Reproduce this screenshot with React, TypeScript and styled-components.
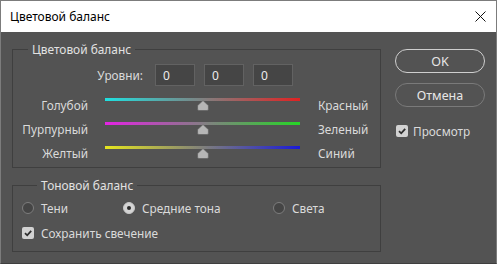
import React, { useState } from "react";
import styled, { createGlobalStyle } from "styled-components";

const GlobalStyle = createGlobalStyle`
  html, body {
    margin: 0;
    padding: 0;
    background: #535353;
  }
  * {
    box-sizing: border-box;
  }
`;

const font = `"Noto Sans", "Open Sans", "Liberation Sans", sans-serif`;

const Window = styled.div`
  width: 497px;
  height: 264px;
  border: 1px solid #7c7c7c;
  border-bottom-color: #3e3e3e;
  display: flex;
  flex-direction: column;
  font-family: ${font};
  overflow: hidden;
`;

const TitleBar = styled.div`
  height: 31px;
  flex: none;
  background: #ffffff;
  display: flex;
  align-items: center;
  justify-content: space-between;
  padding: 0 10px 0 9px;
  font-size: 12px;
  color: #000;
`;

const Body = styled.div`
  flex: 1;
  background: #535353;
  display: flex;
  gap: 14px;
  padding: 9px 11px 0 11px;
  color: #dadada;
  font-size: 11.8px;
`;

const MainColumn = styled.div`
  width: 369px;
  display: flex;
  flex-direction: column;
  gap: 9px;
`;

const SideColumn = styled.div`
  width: 90px;
  padding-top: 8px;
  display: flex;
  flex-direction: column;
`;

const Group = styled.fieldset<{ $pad: string }>`
  margin: 0;
  border: 1px solid #3f3f3f;
  padding: ${(p) => p.$pad};
  min-width: 0;
`;

const Legend = styled.legend`
  margin-left: 15px;
  padding: 0 4px;
  line-height: 16px;
  font-size: 11.9px;
  color: #e2e2e2;
`;

const LevelsRow = styled.div`
  display: flex;
  align-items: center;
  height: 22px;
  margin-bottom: 11px;
`;

const LevelsLabel = styled.span`
  width: 130px;
  text-align: right;
  margin-right: 12px;
`;

const Inputs = styled.div`
  display: flex;
  gap: 9px;
`;

const NumberBox = styled.input`
  width: 40px;
  height: 22px;
  background: #454545;
  border: 1px solid #626262;
  color: #ececec;
  font-family: ${font};
  font-size: 12px;
  padding: 0 0 0 7px;
  outline: none;
`;

const SliderList = styled.div`
  display: flex;
  flex-direction: column;
  gap: 8px;
`;

const SliderRow = styled.div`
  display: flex;
  align-items: center;
  height: 16px;
`;

const SideLabel = styled.span<{ $left?: boolean }>`
  width: ${(p) => (p.$left ? "75px" : "auto")};
  text-align: ${(p) => (p.$left ? "right" : "left")};
  margin: ${(p) => (p.$left ? "0 17px 0 0" : "0 0 0 18px")};
  white-space: nowrap;
`;

const Slider = styled.div`
  position: relative;
  width: 195px;
  height: 14px;
`;

const Track = styled.div<{ $from: string; $to: string }>`
  height: 3px;
  background: linear-gradient(90deg, ${(p) => p.$from}, ${(p) => p.$to});
`;

const Thumb = styled.svg`
  position: absolute;
  top: 2px;
  margin-left: -6px;
`;

const ToneRow = styled.div`
  display: grid;
  grid-template-columns: 101px 150px auto;
  height: 16px;
  align-items: center;
  margin-bottom: 9px;
`;

const Choice = styled.label<{ $gap?: number }>`
  display: flex;
  align-items: center;
  gap: ${(p) => p.$gap ?? 7}px;
  white-space: nowrap;
  cursor: default;
  height: 16px;
`;

const RadioDot = styled.span<{ $on: boolean }>`
  width: 12px;
  height: 12px;
  border-radius: 50%;
  flex: none;
  border: 1px solid ${(p) => (p.$on ? "#c8c8c8" : "#7d7d7d")};
  background: ${(p) => (p.$on ? "#d4d4d4" : "#454545")};
  display: flex;
  align-items: center;
  justify-content: center;

  &::after {
    content: "";
    width: 4px;
    height: 4px;
    border-radius: 50%;
    background: ${(p) => (p.$on ? "#2a2a2a" : "transparent")};
  }
`;

const CheckBox = styled.span`
  width: 12px;
  height: 12px;
  border-radius: 2px;
  flex: none;
  background: #d2d2d2;
  display: flex;
  align-items: center;
  justify-content: center;
`;

const PillButton = styled.button<{ $primary?: boolean }>`
  width: 90px;
  height: 24px;
  border-radius: 12px;
  background: transparent;
  border: ${(p) => (p.$primary ? "1.5px solid #cfcfcf" : "1px solid #7a7a7a")};
  color: #e6e6e6;
  font-family: ${font};
  font-size: 12.5px;
  padding: 0;
  margin-bottom: 10px;
`;

const PreviewRow = styled.div`
  margin-top: 6px;
  padding-left: 1px;
`;

const Check = () => (
  <CheckBox>
    <svg width="10" height="10" viewBox="0 0 10 10">
      <path d="M2 5.2 L4.2 7.3 L8.2 2.8" fill="none" stroke="#2e2e2e" strokeWidth="1.8" />
    </svg>
  </CheckBox>
);

const sliders = [
  { left: "Голубой", right: "Красный", from: "#1fe0e0", to: "#e02222" },
  { left: "Пурпурный", right: "Зеленый", from: "#e423e4", to: "#26d626" },
  { left: "Желтый", right: "Синий", from: "#e6e61e", to: "#1a1ad8" },
];

const tones = ["Тени", "Средние тона", "Света"];

export default function App() {
  const [tone, setTone] = useState(1);
  const levels = [0, 0, 0];

  return (
    <>
      <GlobalStyle />
      <Window>
        <TitleBar>
          <span>Цветовой баланс</span>
          <svg width="11" height="11" viewBox="0 0 11 11">
            <path d="M0.5 0.5 L10.5 10.5 M10.5 0.5 L0.5 10.5" stroke="#111" strokeWidth="1" />
          </svg>
        </TitleBar>
        <Body>
          <MainColumn>
            <Group $pad="7px 0 6px 0">
              <Legend>Цветовой баланс</Legend>
              <LevelsRow>
                <LevelsLabel>Уровни:</LevelsLabel>
                <Inputs>
                  {levels.map((v, i) => (
                    <NumberBox key={i} defaultValue={v} />
                  ))}
                </Inputs>
              </LevelsRow>
              <SliderList>
                {sliders.map((s) => (
                  <SliderRow key={s.left}>
                    <SideLabel $left>{s.left}</SideLabel>
                    <Slider>
                      <Track $from={s.from} $to={s.to} />
                      <Thumb width="12" height="11" viewBox="0 0 12 11" style={{ left: "50%" }}>
                        <path
                          d="M6 0.6 L11.4 5.6 V9.2 Q11.4 10.5 10.1 10.5 H1.9 Q0.6 10.5 0.6 9.2 V5.6 Z"
                          fill="#b6b6b6"
                          stroke="#5a5a5a"
                          strokeWidth="0.6"
                        />
                      </Thumb>
                    </Slider>
                    <SideLabel>{s.right}</SideLabel>
                  </SliderRow>
                ))}
              </SliderList>
            </Group>
            <Group $pad="7px 9px 10px 9px">
              <Legend>Тоновой баланс</Legend>
              <ToneRow>
                {tones.map((t, i) => (
                  <Choice key={t} onClick={() => setTone(i)}>
                    <RadioDot $on={tone === i} />
                    {t}
                  </Choice>
                ))}
              </ToneRow>
              <Choice>
                <Check />
                Сохранить свечение
              </Choice>
            </Group>
          </MainColumn>
          <SideColumn>
            <PillButton $primary>OK</PillButton>
            <PillButton>Отмена</PillButton>
            <PreviewRow>
              <Choice $gap={5}>
                <Check />
                Просмотр
              </Choice>
            </PreviewRow>
          </SideColumn>
        </Body>
      </Window>
    </>
  );
}
